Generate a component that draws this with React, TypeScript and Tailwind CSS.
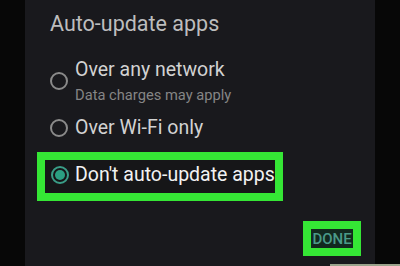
function Radio({ checked = false }: { checked?: boolean }) {
  if (checked) {
    return (
      <span className="flex h-[18px] w-[18px] flex-shrink-0 items-center justify-center rounded-full border-2 border-[#3a9d87]">
        <span className="h-[10px] w-[10px] rounded-full bg-[#2b9f82]" />
      </span>
    );
  }
  return <span className="h-[18px] w-[18px] flex-shrink-0 rounded-full border-2 border-[#8a8a8a]" />;
}

export default function App() {
  return (
    <div className="relative flex h-[266px] w-[400px] overflow-hidden bg-[#070707] font-['Roboto',sans-serif]">
      <div className="w-[25px] flex-shrink-0" />

      <div className="flex h-full w-[350px] flex-shrink-0 flex-col bg-[#19191d] pl-[25px] pt-[11px]">
        <p className="text-[21.5px] leading-[25px] text-[#bdbdbd]">Auto-update apps</p>

        <div className="mt-[22px] flex items-center gap-[7px]">
          <Radio />
          <div className="flex flex-col">
            <p className="text-[19.5px] leading-[24px] text-[#d2d2d2]">Over any network</p>
            <p className="mt-[4px] text-[14.7px] leading-[18px] text-[#858585]">Data charges may apply</p>
          </div>
        </div>

        <div className="mt-[12px] flex items-center gap-[7px]">
          <Radio />
          <p className="text-[19.5px] leading-[24px] text-[#d2d2d2]">Over Wi-Fi only</p>
        </div>

        <div className="-ml-[13px] mt-[12px] w-[246px] border-[8px] border-[#35e635] bg-[#161618]">
          <div className="flex h-[33px] items-center gap-[6px] pb-[3px] pl-[6px]">
            <Radio checked />
            <p className="whitespace-nowrap text-[19.5px] leading-[24px] text-[#f2f2f2]">Don't auto-update apps</p>
          </div>
        </div>

        <div className="mt-[20px] flex justify-end pr-[14px]">
          <div className="border-[8px] border-[#35e635]">
            <div className="flex h-[19px] w-[42px] items-center justify-center bg-[#12281f] text-[15px] font-medium leading-[18px] text-[#4a9a88]">
              DONE
            </div>
          </div>
        </div>
      </div>

      <div className="flex-1" />

      <div className="absolute bottom-0 right-0 h-[2px] w-[70px] bg-[#9aa38c]" />
    </div>
  );
}
